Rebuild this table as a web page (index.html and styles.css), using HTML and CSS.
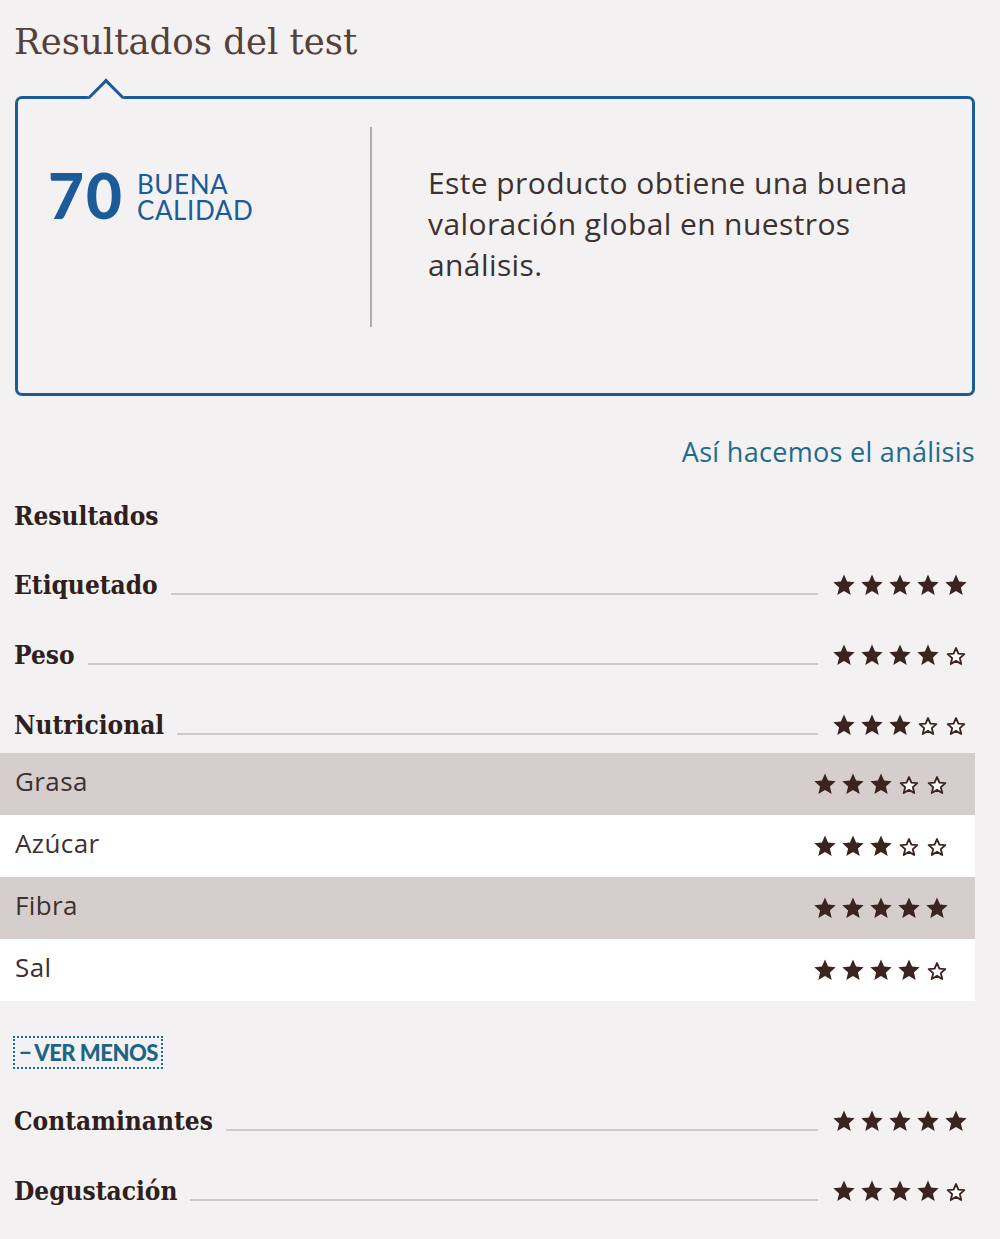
FILE: index.html
```html
<!DOCTYPE html>
<html>
<head>
    <link rel="stylesheet" href="styles.css">
</head>
<body>
    <div class="page">
        <h1 class="title">Resultados del test</h1>

        <div class="verdict">
            <span class="notch"></span>
            <div class="score">
                <span class="score-num">70</span>
                <span class="score-label"><span>BUENA</span><span>CALIDAD</span></span>
            </div>
            <div class="divider"></div>
            <p class="summary">Este producto obtiene una buena valoración global en nuestros análisis.</p>
        </div>

        <div class="method"><a href="#">Así hacemos el análisis</a></div>

        <h2 class="section">Resultados</h2>

        <div class="rating"><span class="rating-name">Etiquetado</span><span class="rating-line"></span><span class="stars" data-score="5"></span></div>
        <div class="rating"><span class="rating-name">Peso</span><span class="rating-line"></span><span class="stars" data-score="4"></span></div>
        <div class="rating"><span class="rating-name">Nutricional</span><span class="rating-line"></span><span class="stars" data-score="3"></span></div>

        <div class="details">
            <div class="detail"><span class="detail-name">Grasa</span><span class="stars" data-score="3"></span></div>
            <div class="detail"><span class="detail-name">Azúcar</span><span class="stars" data-score="3"></span></div>
            <div class="detail"><span class="detail-name">Fibra</span><span class="stars" data-score="5"></span></div>
            <div class="detail"><span class="detail-name">Sal</span><span class="stars" data-score="4"></span></div>
        </div>

        <button class="toggle"><span class="toggle-sign">−</span>VER MENOS</button>

        <div class="rating"><span class="rating-name">Contaminantes</span><span class="rating-line"></span><span class="stars" data-score="5"></span></div>
        <div class="rating"><span class="rating-name">Degustación</span><span class="rating-line"></span><span class="stars" data-score="4"></span></div>
    </div>

  <script>
    const STAR = 'M12 1.5l3.1 7.1 7.6.7-5.8 5.1 1.8 7.6L12 18l-6.7 4 1.8-7.6-5.8-5.1 7.6-.7z';
    const FULL = `<svg class="star" viewBox="0 0 24 24"><path d="${STAR}"/></svg>`;
    const EMPTY = `<svg class="star empty" viewBox="0 0 24 24"><g transform="translate(12 14) scale(.78) translate(-12 -13)"><path d="${STAR}"/></g></svg>`;

    // Fill every rating with its stars
    document.querySelectorAll('.stars').forEach(el => {
      const score = Number(el.dataset.score);
      let html = '';
      for (let i = 0; i < 5; i++) {
        html += i < score ? FULL : EMPTY;
      }
      el.innerHTML = html;
    });
  </script>
</body>
</html>
```

FILE: styles.css
```css
* {
    box-sizing: border-box;
}

body {
    margin: 0;
    background: #f3f1f2;
    font-family: "Open Sans", Lato, sans-serif;
    color: #3a2e2c;
}

.page {
    width: 975px;
    padding: 1px 0 40px;
}

.title {
    margin: 16px 0 0 14px;
    font-family: "DejaVu Serif", serif;
    font-weight: normal;
    font-size: 35.5px;
    line-height: 50px;
    color: #55403a;
}

.verdict {
    position: relative;
    display: flex;
    align-items: flex-start;
    height: 300px;
    margin: 29px 0 0 15px;
    border: 3px solid #1b5b98;
    border-radius: 7px;
}

.notch {
    position: absolute;
    top: -15px;
    left: 75px;
    width: 26px;
    height: 26px;
    background: #f3f1f2;
    border-top: 3px solid #1b5b98;
    border-left: 3px solid #1b5b98;
    transform: rotate(45deg);
}

.score {
    display: flex;
    align-items: flex-start;
    width: 352px;
    padding: 65px 0 0 30px;
    color: #1b5b98;
}

.score-num {
    font-family: Lato, sans-serif;
    font-weight: 900;
    font-size: 62px;
    line-height: 62px;
    letter-spacing: 2px;
}

.score-label {
    display: flex;
    flex-direction: column;
    margin: 7px 0 0 13px;
    font-family: Lato, sans-serif;
    font-size: 26px;
    line-height: 26px;
    letter-spacing: 0.6px;
}

.divider {
    width: 2px;
    height: 200px;
    margin-top: 28px;
    background: #b3acaa;
}

.summary {
    width: 510px;
    margin: 63px 0 0 56px;
    font-size: 30px;
    line-height: 41px;
    letter-spacing: 0.4px;
    color: #3b3130;
}

.method {
    margin-top: 38px;
    text-align: right;
}

.method a {
    font-size: 27px;
    line-height: 36px;
    letter-spacing: 0.3px;
    color: #1d6b8d;
    text-decoration: none;
}

.section {
    margin: 26px 0 14px 14px;
    font-family: "DejaVu Serif Condensed", "DejaVu Serif", serif;
    font-size: 26px;
    line-height: 40px;
    color: #2d201d;
}

.rating {
    display: flex;
    align-items: center;
    height: 70px;
    padding: 0 7px 0 14px;
}

.rating-name {
    font-family: "DejaVu Serif Condensed", "DejaVu Serif", serif;
    font-weight: bold;
    font-size: 26px;
    color: #2d201d;
}

.rating-line {
    flex: 1;
    height: 2px;
    margin: 18px 14px 0 13px;
    background: #cdc9c9;
}

.stars {
    display: flex;
    gap: 4px;
}

.star {
    width: 24px;
    height: 24px;
    fill: #3b2420;
}

.star.empty {
    fill: #fff;
    stroke: #3b2420;
    stroke-width: 2.4px;
    stroke-linejoin: round;
}

.details {
    margin-top: -7px;
}

.detail {
    display: flex;
    align-items: center;
    justify-content: space-between;
    height: 62px;
    padding: 0 26px 0 15px;
    background: #fff;
    font-size: 26px;
    letter-spacing: 0.4px;
    color: #3b3130;
}

.detail-name {
    margin-top: -6px;
}

.detail:nth-child(odd) {
    background: #d6cecc;
}

.toggle {
    display: block;
    margin: 35px 0 0 13px;
    padding: 2px 3px 1px 4px;
    border: 2px dotted #1d6b8d;
    background: none;
    font-family: Lato, sans-serif;
    font-weight: 900;
    font-size: 22px;
    line-height: 26px;
    color: #1d6485;
    letter-spacing: -0.5px;
}

.toggle-sign {
    margin-right: 3px;
}

.toggle + .rating {
    margin-top: 17px;
}
```
